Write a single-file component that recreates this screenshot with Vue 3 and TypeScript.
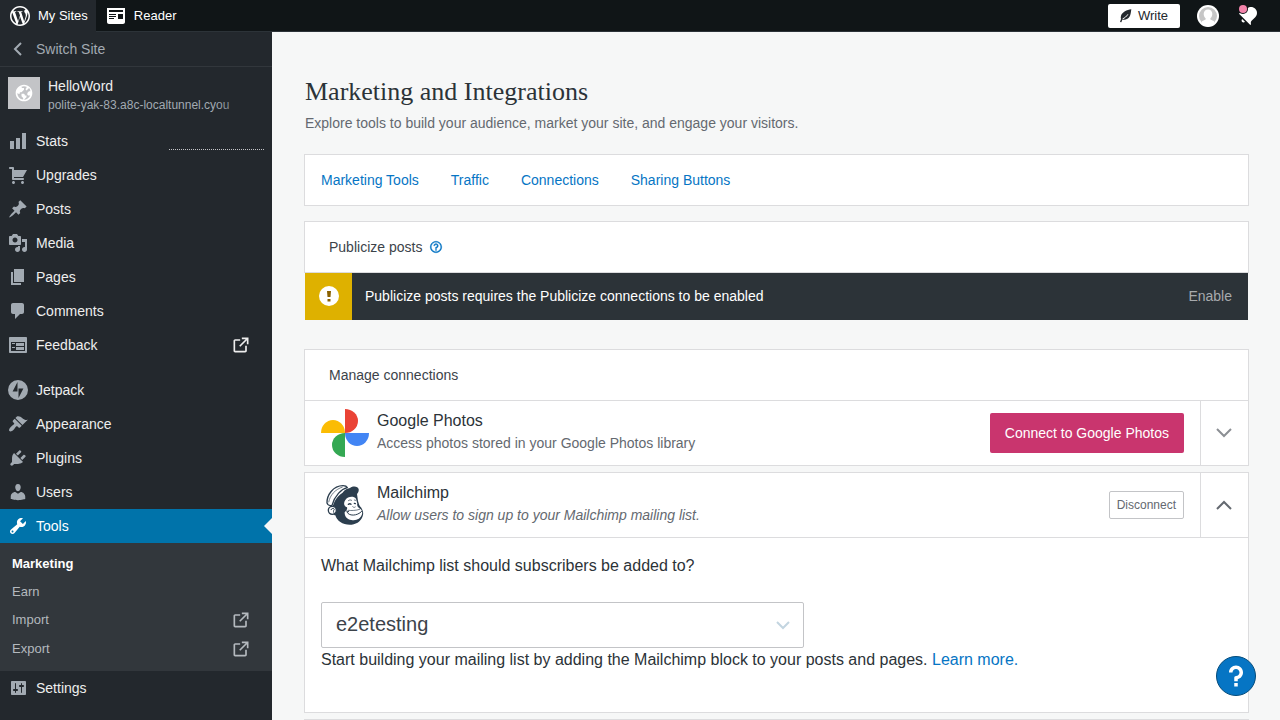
<script setup lang="ts">
import { ref } from 'vue'

interface MenuItem {
  label: string
  icon: string
  external?: boolean
  active?: boolean
  sparkline?: boolean
}

interface SubItem {
  label: string
  external?: boolean
  current?: boolean
}

const icons: Record<string, string> = {
  stats: 'M18 18V2h-4v16h4zm-6 0V7H8v11h4zm-6 0v-8H2v8h4z',
  cart: 'M6 13h9c.55 0 1 .45 1 1s-.45 1-1 1H5c-.55 0-1-.45-1-1V4H2c-.55 0-1-.45-1-1s.45-1 1-1h3c.55 0 1 .45 1 1v2h13l-4 7H6v1zm-.5 3c.83 0 1.5.67 1.5 1.5S6.33 19 5.5 19 4 18.33 4 17.5 4.67 16 5.5 16zm9 0c.83 0 1.5.67 1.5 1.5s-.67 1.5-1.5 1.5-1.5-.67-1.5-1.5.67-1.5 1.5-1.5z',
  post: 'M10.44 3.02l1.82-1.82 6.36 6.35-1.83 1.82c-1.05-.68-2.48-.57-3.41.36l-.75.75c-.92.93-1.04 2.35-.35 3.41l-1.83 1.82-2.41-2.41-2.8 2.79c-.42.42-3.38 2.71-3.8 2.29s1.86-3.39 2.28-3.81l2.79-2.79L4.1 9.36l1.83-1.82c1.05.69 2.48.57 3.4-.36l.75-.75c.93-.92 1.05-2.35.36-3.41z',
  media: 'M13 11V4c0-.55-.45-1-1-1h-1.67L9 1H5L3.67 3H2c-.55 0-1 .45-1 1v7c0 .55.45 1 1 1h10c.55 0 1-.45 1-1zM7 4.5c1.38 0 2.5 1.12 2.5 2.5S8.38 9.5 7 9.5 4.5 8.38 4.5 7 5.62 4.5 7 4.5zM14 6h5v10.5c0 1.38-1.12 2.5-2.5 2.5S14 17.88 14 16.5s1.12-2.5 2.5-2.5c.17 0 .34.02.5.05V9h-3V6zm-4 8.05V13h2v3.5c0 1.38-1.12 2.5-2.5 2.5S7 17.88 7 16.5 8.12 14 9.5 14c.17 0 .34.02.5.05z',
  page: 'M6 15V2h10v13H6zm-1 1h8v2H3V5h2v11z',
  comment: 'M5 2h9c1.1 0 2 .9 2 2v7c0 1.1-.9 2-2 2h-2l-5 5v-5H5c-1.1 0-2-.9-2-2V4c0-1.1.9-2 2-2z',
  feedback: 'M2 2h16c.55 0 1 .45 1 1v14c0 .55-.45 1-1 1H2c-.55 0-1-.45-1-1V3c0-.55.45-1 1-1zm15 14V7H3v9h14zM4 8v1h3V8H4zm4 0v3h8V8H8zm-4 4v1h3v-1H4zm4 0v3h8v-3H8z',
  jetpack: 'M10 0a10 10 0 1 0 0 20 10 10 0 0 0 0-20zM9.5 11.6H4.6L9.5 2zM10.5 18V8.4h4.9z',
  appearance: 'M14.48 11.06L7.41 3.99l1.5-1.5c.5-.56 2.3-.47 3.51.32 1.21.8 1.43 1.28 2.91 2.1 1.18.64 2.45 1.26 4.45.85zm-.71.71L6.7 4.7 4.93 6.47c-.39.39-.39 1.02 0 1.41l1.06 1.06c.39.39.39 1.03 0 1.42-.6.6-1.43 1.11-2.21 1.69-.35.26-.7.53-1.01.84C1.43 14.23.4 16.08 1.4 17.07c.99 1 2.84-.03 4.18-1.36.31-.31.58-.66.85-1.02.57-.78 1.08-1.61 1.69-2.21.39-.39 1.02-.39 1.41 0l1.06 1.06c.39.39 1.02.39 1.41 0z',
  plugins: 'M13.11 4.36L9.87 7.6 8 5.73l3.24-3.24c.35-.34 1.05-.2 1.56.32.52.51.66 1.21.31 1.55zm-8 1.77l.91-1.12 9.01 9.01-1.19.84c-.71.71-2.63 1.16-3.82 1.16H6.14L4.9 17.26c-.59.59-1.54.59-2.12 0-.59-.58-.59-1.53 0-2.12l1.24-1.24v-3.88c0-1.13.4-3.19 1.09-3.89zm7.26 3.97l3.24-3.24c.34-.35 1.04-.21 1.55.31.52.51.66 1.21.31 1.55l-3.24 3.25z',
  users: 'M10 9.25c-2.27 0-2.73-3.44-2.73-3.44C7 4.02 7.82 2 9.97 2c2.16 0 2.98 2.02 2.71 3.81 0 0-.41 3.44-2.68 3.44zm0 2.57L12.72 10c2.39 0 4.52 2.33 4.52 4.53v2.49s-3.65 1.13-7.24 1.13c-3.65 0-7.24-1.13-7.24-1.13v-2.49c0-2.25 1.94-4.48 4.47-4.48z',
  tools: 'M16.68 9.77c-1.34 1.34-3.3 1.67-4.95.99l-5.41 6.52c-.99.99-2.59.99-3.58 0s-.99-2.59 0-3.57l6.52-5.42c-.68-1.65-.35-3.61.99-4.95 1.28-1.28 3.12-1.62 4.72-1.06l-2.89 2.89 2.82 2.82 2.86-2.87c.53 1.58.18 3.39-1.08 4.65zM3.81 16.21c.4.39 1.04.39 1.43 0 .4-.4.4-1.04 0-1.43-.39-.4-1.03-.4-1.43 0-.39.39-.39 1.03 0 1.43z',
  settings: 'M18 16V4c0-.55-.45-1-1-1H4c-.55 0-1 .45-1 1v12c0 .55.45 1 1 1h13c.55 0 1-.45 1-1zM8 11h1c.55 0 1 .45 1 1s-.45 1-1 1H8v1.5c0 .28-.22.5-.5.5s-.5-.22-.5-.5V13H6c-.55 0-1-.45-1-1s.45-1 1-1h1V5.5c0-.28.22-.5.5-.5s.5.22.5.5V11zm5-2h-1c-.55 0-1-.45-1-1s.45-1 1-1h1V5.5c0-.28.22-.5.5-.5s.5.22.5.5V7h1c.55 0 1 .45 1 1s-.45 1-1 1h-1v5.5c0 .28-.22.5-.5.5s-.5-.22-.5-.5V9z',
}

const externalPath =
  'M19 13v6c0 1.105-.895 2-2 2H5c-1.105 0-2-.895-2-2V7c0-1.105.895-2 2-2h6v2H5v12h12v-6h2zM13 3v2h4.586l-7.793 7.793 1.414 1.414L19 6.414V11h2V3h-8z'

const menuGroups: MenuItem[][] = [
  [
    { label: 'Stats', icon: 'stats', sparkline: true },
    { label: 'Upgrades', icon: 'cart' },
    { label: 'Posts', icon: 'post' },
    { label: 'Media', icon: 'media' },
    { label: 'Pages', icon: 'page' },
    { label: 'Comments', icon: 'comment' },
    { label: 'Feedback', icon: 'feedback', external: true },
  ],
  [
    { label: 'Jetpack', icon: 'jetpack' },
    { label: 'Appearance', icon: 'appearance' },
    { label: 'Plugins', icon: 'plugins' },
    { label: 'Users', icon: 'users' },
    { label: 'Tools', icon: 'tools', active: true },
    { label: 'Settings', icon: 'settings' },
  ],
]

const toolsMenu: SubItem[] = [
  { label: 'Marketing', current: true },
  { label: 'Earn' },
  { label: 'Import', external: true },
  { label: 'Export', external: true },
]

const tabs: string[] = ['Marketing Tools', 'Traffic', 'Connections', 'Sharing Buttons']
const selectedList = ref<string>('e2etesting')
const googleOpen = ref<boolean>(false)
const mailchimpOpen = ref<boolean>(true)
</script>

<template>
  <div class="shell">
    <header class="masthead">
      <a href="#" class="mast-item current">
        <svg width="24" height="24" viewBox="0 0 24 24" aria-hidden="true">
          <path fill="currentColor" d="M12 2C6.5 2 2 6.5 2 12s4.5 10 10 10 10-4.5 10-10S17.5 2 12 2zM3.5 12c0-1.2.3-2.4.7-3.5L8.3 19.6C5.4 18.3 3.5 15.4 3.5 12zM12 20.5c-.8 0-1.6-.1-2.4-.3l2.5-7.4 2.6 7.1c0 0 0 .1.1.1C13.9 20.3 13 20.5 12 20.5zM13.2 8c.5 0 1-.1 1-.1.5-.1.4-.7 0-.7 0 0-1.4.1-2.2.1-.8 0-2.2-.1-2.2-.1-.5 0-.5.7 0 .7 0 0 .4.1.9.1l1.3 3.6-1.9 5.6L7 8c.5 0 1-.1 1-.1.5-.1.4-.7-.1-.7 0 0-1.4.1-2.2.1-.2 0-.3 0-.5 0C6.4 5.1 9 3.5 12 3.5c2.2 0 4.2.8 5.7 2.2 0 0-.1 0-.1 0-.8 0-1.4.7-1.4 1.5 0 .7.4 1.3.9 1.9.4.6.7 1.4.7 2.5 0 .7-.2 1.7-.7 2.9l-.9 2.9L13.2 8zM16.3 19.4l2.6-7.5c.5-1.2.6-2.2.6-3 0-.3 0-.6-.1-.8.7 1.2 1.1 2.6 1.1 4C20.5 15.2 18.8 17.9 16.3 19.4z" />
        </svg>
        <span>My Sites</span>
      </a>
      <a href="#" class="mast-item">
        <svg width="24" height="24" viewBox="0 0 24 24" aria-hidden="true">
          <path fill="currentColor" d="M3 4v14c0 1.1.9 2 2 2h14c1.1 0 2-.9 2-2V4H3zm7 11H5v-1h5v1zm2-2H5v-1h7v1zm0-2H5v-1h7v1zm7 4h-5v-5h5v5zm0-7H5V6h14v2z" />
        </svg>
        <span>Reader</span>
      </a>
      <div class="mast-right">
        <button type="button" class="write">
          <svg width="12" height="14" viewBox="0 0 36 42" aria-hidden="true">
            <path fill="#23282d" d="M34 1C20 3 7 9 3 20c-1 4-1 7 0 10L0 39l4 1 3-8c12 1 22-5 24-15 2-6 2-11 3-16z" />
            <path fill="none" stroke="#fff" stroke-width="3" stroke-linecap="round" d="M9 29c5-2 10-6 14-12" />
          </svg>
          <span>Write</span>
        </button>
        <a href="#" class="mast-avatar" aria-label="My profile">
          <svg width="22" height="22" viewBox="0 0 22 22" aria-hidden="true">
            <circle cx="11" cy="11" r="11" fill="#fff" />
            <circle cx="11" cy="11" r="9" fill="#c6c6c6" />
            <path fill="#fff" d="M11 4.500c2.700 0 4.300 1.900 4.300 4.500 0 1.800-.8 3.300-1.900 4.200v1.300l3.600 1.700v3A10 10 0 0 1 5 19.200v-3l3.600-1.700v-1.300C7.500 12.300 6.700 10.800 6.700 9c0-2.600 1.600-4.500 4.300-4.500z" />
          </svg>
        </a>
        <a href="#" class="mast-bell" aria-label="Notifications">
          <svg width="24" height="24" viewBox="0 0 24 24" aria-hidden="true">
            <path fill="#fff" d="M6.140 14.970l2.828 2.827c-.362.362-.862.586-1.414.586-1.105 0-2-.895-2-2 0-.552.224-1.052.586-1.414zm8.867 5.324L14.300 21 3 9.700l.706-.707 1.102.157c.754.108 1.690-.122 2.077-.510l3.885-3.884c2.340-2.340 6.135-2.340 8.475 0s2.340 6.135 0 8.475l-3.885 3.886c-.388.388-.618 1.323-.510 2.077l.157 1.100z" />
            <circle cx="7" cy="5" r="5" fill="#101517" />
            <circle cx="7" cy="5" r="4" fill="#f283aa" />
          </svg>
        </a>
      </div>
    </header>

    <div class="layout">
      <aside class="sidebar">
        <button type="button" class="switch">
          <svg width="20" height="20" viewBox="0 0 20 20" aria-hidden="true">
            <path fill="none" stroke="currentColor" stroke-width="2" d="M13 4l-6 6 6 6" />
          </svg>
          <span>Switch Site</span>
        </button>

        <a href="#" class="site">
          <span class="site-icon">
            <svg width="20" height="20" viewBox="0 0 24 24" aria-hidden="true">
              <path fill="#fff" d="M12 2C6.477 2 2 6.477 2 12s4.477 10 10 10 10-4.477 10-10S17.523 2 12 2zm0 18l2-2 1-1v-2h-2v-1l-1-1H9v3l2 2v1.931C7.060 19.436 4 16.072 4 12l1 1h2v-2h2l3-3V6h-2L9 5v-.411a7.945 7.945 0 016 0V6l-1 1v1l1 1 3.130-3.130A7.983 7.983 0 0119.736 10H18l-2 2v2l1 1h2l.286.286C18.029 18.061 15.239 20 12 20z" />
            </svg>
          </span>
          <span class="site-text">
            <span class="site-name">HelloWord</span>
            <span class="site-domain">polite-yak-83.a8c-localtunnel.cyou</span>
          </span>
        </a>

        <nav class="menu" aria-label="Site">
          <ul v-for="(group, g) in menuGroups" :key="g">
            <li v-for="item in group" :key="item.label">
              <a href="#" class="menu-link" :class="{ active: item.active }">
                <svg class="menu-icon" width="20" height="20" viewBox="0 0 20 20" aria-hidden="true">
                  <path fill="currentColor" fill-rule="evenodd" :d="icons[item.icon]" />
                </svg>
                <span class="menu-label">{{ item.label }}</span>
                <span v-if="item.sparkline" class="sparkline"></span>
                <svg v-if="item.external" class="external" width="20" height="20" viewBox="0 0 24 24" aria-hidden="true">
                  <path fill="currentColor" :d="externalPath" />
                </svg>
              </a>
              <ul v-if="item.active" class="submenu">
                <li v-for="sub in toolsMenu" :key="sub.label">
                  <a href="#" class="sub-link" :class="{ current: sub.current, outside: sub.external }">
                    <span>{{ sub.label }}</span>
                    <svg v-if="sub.external" class="external" width="20" height="20" viewBox="0 0 24 24" aria-hidden="true">
                      <path fill="currentColor" :d="externalPath" />
                    </svg>
                  </a>
                </li>
              </ul>
            </li>
          </ul>
        </nav>
      </aside>

      <main class="content">
        <h1>Marketing and Integrations</h1>
        <p class="lead">Explore tools to build your audience, market your site, and engage your visitors.</p>

        <nav class="tabs card" aria-label="Marketing">
          <a v-for="tab in tabs" :key="tab" href="#">{{ tab }}</a>
        </nav>

        <div class="section-header card">
          <h2>Publicize posts</h2>
          <button type="button" class="info" aria-label="More information">
            <svg width="14" height="14" viewBox="0 0 24 24" aria-hidden="true">
              <path fill="currentColor" stroke="currentColor" stroke-width="0.5" d="M12 4c4.411 0 8 3.589 8 8s-3.589 8-8 8-8-3.589-8-8 3.589-8 8-8m0-2C6.477 2 2 6.477 2 12s4.477 10 10 10 10-4.477 10-10S17.523 2 12 2zm4 8c0-2.210-1.790-4-4-4s-4 1.790-4 4h2c0-1.103.897-2 2-2s2 .897 2 2-.897 2-2 2c-.552 0-1 .448-1 1v2h2v-1.141c1.722-.447 3-1.998 3-3.859zm-3 6h-2v2h2v-2z" />
            </svg>
          </button>
        </div>
        <div class="notice">
          <span class="notice-icon">
            <svg width="20" height="20" viewBox="0 0 20 20" aria-hidden="true">
              <circle cx="10" cy="10" r="10" fill="#fff" />
              <path fill="#8a6100" d="M8 5h4l-.500 6h-3zM8.500 13h3v2.500h-3z" />
            </svg>
          </span>
          <span class="notice-text">Publicize posts requires the Publicize connections to be enabled</span>
          <button type="button" class="notice-action">Enable</button>
        </div>

        <div class="section-header card manage">
          <h2>Manage connections</h2>
        </div>

        <section class="card service attached">
          <div class="service-head">
            <svg class="logo" width="48" height="48" viewBox="0 0 48 48" aria-hidden="true">
              <path fill="#ea4335" d="M24 0a13 12 0 0 1 0 24z" />
              <path fill="#fbbc04" d="M0 24a12 13 0 0 1 24 0z" />
              <path fill="#4285f4" d="M24 24h24a12 13 0 0 1-24 0z" />
              <path fill="#34a853" d="M24 24v24a13 12 0 0 1 0-24z" />
            </svg>
            <div class="service-text">
              <h3>Google Photos</h3>
              <p>Access photos stored in your Google Photos library</p>
            </div>
            <button type="button" class="primary">Connect to Google Photos</button>
            <button type="button" class="toggle" :aria-expanded="googleOpen" aria-label="Toggle Google Photos" @click="googleOpen = !googleOpen">
              <svg width="24" height="24" viewBox="0 0 24 24" aria-hidden="true">
                <path fill="none" stroke="#8c8f94" stroke-width="2" d="M5 8l7 7 7-7" />
              </svg>
            </button>
          </div>
        </section>

        <section class="card service">
          <div class="service-head ruled">
            <svg class="logo" width="48" height="48" viewBox="63 258 144 144" aria-hidden="true">
              <path fill="#2c3e4e" d="M98 334C106 312 114 302 127 294C134 284 143 280 150 279C160 272 174 274 176 283C177 289 174 294 171 297L174 318C177 327 177 333 184 338C187 344 191 350 189 360C186 375 173 387 155 389C130 391 111 379 106 361C99 362 101 343 98 334z" />
              <path fill="#fff" stroke="#2c3e4e" stroke-width="4" stroke-linejoin="round" d="M81 324C80 301 99 272 129 272C135 272 140 274 142 278C124 282 104 302 96 331C90 333 83 330 81 324z" />
              <path fill="none" stroke="#2c3e4e" stroke-width="2" d="M86 322C90 300 106 283 128 276" />
              <circle cx="97" cy="346" r="12" fill="#fff" stroke="#2c3e4e" stroke-width="4" />
              <path fill="none" stroke="#2c3e4e" stroke-width="3" stroke-linecap="round" d="M93 344c2-5 9-5 10-1-1 2-4 4-2 9" />
              <path fill="#fff" d="M136 315C143 304 161 302 168 311L172 326C170 332 174 337 180 341C187 344 187 353 186 358C182 372 168 378 154 375C142 373 133 364 134 352C139 347 143 343 141 337C131 333 130 323 136 315z" />
              <g fill="none" stroke="#2c3e4e" stroke-linecap="round">
                <path stroke-width="2" d="M145 317c3-3 7-3 10-1M163 315l4 1M158 335c2 3 6 3 8 1M145 346c9 1 23 1 34-3" />
                <path stroke-width="4" d="M145 328c3-2 6-2 8 0M163 325l3 1" />
                <path stroke-width="3" d="M141 351c4 13 31 13 44-2M140 348l6 2" />
              </g>
            </svg>
            <div class="service-text">
              <h3>Mailchimp</h3>
              <p><em>Allow users to sign up to your Mailchimp mailing list.</em></p>
            </div>
            <button type="button" class="compact">Disconnect</button>
            <button type="button" class="toggle" :aria-expanded="mailchimpOpen" aria-label="Toggle Mailchimp" @click="mailchimpOpen = !mailchimpOpen">
              <svg width="24" height="24" viewBox="0 0 24 24" aria-hidden="true">
                <path fill="none" stroke="#646970" stroke-width="2" d="M5 16l7-7 7 7" />
              </svg>
            </button>
          </div>
          <div v-if="mailchimpOpen" class="service-body">
            <label for="mailchimp-list">What Mailchimp list should subscribers be added to?</label>
            <div class="select-wrap">
              <select id="mailchimp-list" v-model="selectedList">
                <option value="e2etesting">e2etesting</option>
              </select>
              <svg class="select-arrow" width="14" height="9" viewBox="0 0 14 9" aria-hidden="true">
                <path fill="none" stroke="#c3d5e0" stroke-width="2" d="M1 1l6 6 6-6" />
              </svg>
            </div>
            <p>Start building your mailing list by adding the Mailchimp block to your posts and pages. <a href="#">Learn more.</a></p>
          </div>
        </section>

        <section class="card service next"></section>
      </main>
    </div>

    <button type="button" class="help" aria-label="Help">
      <svg width="42" height="42" viewBox="0 0 24 24" aria-hidden="true">
        <path fill="#fff" d="M16 10c0-2.210-1.790-4-4-4s-4 1.790-4 4h2c0-1.103.897-2 2-2s2 .897 2 2-.897 2-2 2c-.552 0-1 .448-1 1v2h2v-1.141c1.722-.447 3-1.998 3-3.859zm-3 6h-2v2h2v-2z" />
      </svg>
    </button>
  </div>
</template>

<style>
body {
  margin: 0;
  background: #f6f7f7;
}
</style>

<style scoped>
* {
  box-sizing: border-box;
}

.shell {
  display: flex;
  flex-direction: column;
  height: 100vh;
  overflow: hidden;
  font-family: "Liberation Sans", Arial, sans-serif;
  font-size: 14px;
  line-height: 20px;
  color: #2c3338;
}

a {
  color: #0675c4;
  text-decoration: none;
}

button {
  font: inherit;
  padding: 0;
  border: 0;
  background: none;
  cursor: pointer;
}

svg {
  display: block;
  flex: none;
}

h1,
h2,
h3,
p,
ul {
  margin: 0;
  padding: 0;
  font-weight: 400;
}

ul {
  list-style: none;
}

.masthead {
  display: flex;
  flex: none;
  height: 32px;
  background: #101517;
  border-bottom: 1px solid #2c3338;
  font-size: 13px;
}

.mast-item {
  display: flex;
  align-items: center;
  gap: 6px;
  height: 32px;
  padding: 0 8px;
  color: #fff;
}

.mast-item.current {
  background: #23282d;
}

.mast-right {
  display: flex;
  align-items: center;
  margin-left: auto;
  padding-right: 20px;
  height: 32px;
}

.write {
  display: flex;
  align-items: center;
  gap: 6px;
  height: 24px;
  padding: 0 12px;
  border-radius: 2px;
  background: #fff;
  color: #23282d;
}

.mast-avatar {
  margin-left: 17px;
}

.mast-bell {
  margin-left: 17px;
}

.layout {
  display: flex;
  flex: 1;
  min-height: 0;
}

.sidebar {
  flex: none;
  width: 272px;
  background: #23282d;
  color: #eee;
}

.switch {
  display: flex;
  align-items: center;
  gap: 8px;
  width: 100%;
  height: 35px;
  padding: 0 8px;
  border-bottom: 1px solid #32373c;
  color: #a2aab2;
}

.site {
  position: relative;
  display: flex;
  gap: 8px;
  padding: 9px 8px;
  color: #eee;
}

.site::after {
  content: "";
  position: absolute;
  top: 0;
  right: 8px;
  bottom: 0;
  width: 48px;
  background: linear-gradient(to right, rgba(35, 40, 45, 0), #23282d);
}

.site-icon {
  display: flex;
  align-items: center;
  justify-content: center;
  width: 32px;
  height: 32px;
  margin-top: 1px;
  background: #c3c4c7;
}

.site-text {
  display: flex;
  flex-direction: column;
}

.site-name {
  line-height: 20px;
}

.site-domain {
  font-size: 12px;
  line-height: 18px;
  color: #a2aab2;
}

.menu ul + ul {
  margin-top: 11px;
}

.menu {
  padding-top: 1px;
}

.menu-link {
  display: flex;
  align-items: center;
  gap: 8px;
  height: 34px;
  padding: 0 8px;
  color: #eee;
}

.menu-icon {
  color: #a2aab2;
}

.menu-link.active {
  position: relative;
  background: #0073aa;
  color: #fff;
}

.menu-link.active .menu-icon {
  color: #fff;
}

.menu-link.active::after {
  content: "";
  position: absolute;
  top: 9px;
  right: 0;
  border: 8px solid transparent;
  border-left: 0;
  border-right-color: #f6f7f7;
}

.sparkline {
  align-self: flex-end;
  width: 95px;
  margin: 0 0 8px auto;
  border-bottom: 1px dotted #c3c4c7;
}

.external {
  margin: 0 13px 0 auto;
}

.submenu {
  padding: 7px 0;
  background: #32373c;
  font-size: 13px;
}

.sub-link {
  display: flex;
  align-items: center;
  height: 28px;
  padding: 0 8px 0 12px;
  color: #b4b9be;
}

.sub-link.outside {
  height: 29px;
  padding-bottom: 1px;
}

.sub-link.current {
  color: #fff;
  font-weight: 700;
}

.content {
  flex: 1;
  min-width: 0;
  padding: 44px 31px 0 32px;
}

h1 {
  padding-left: 1px;
  font-family: "Liberation Serif", serif;
  font-size: 26px;
  line-height: 32px;
}

.lead {
  margin: 5px 0 21px 1px;
  color: #646970;
}

.card {
  background: #fff;
  border: 1px solid #dcdcde;
}

.tabs {
  display: flex;
  align-items: center;
  gap: 32px;
  height: 52px;
  padding: 0 16px;
}

.section-header {
  display: flex;
  align-items: center;
  gap: 7px;
  height: 52px;
  margin-top: 15px;
  padding: 0 24px;
}

.section-header h2 {
  font-size: 14px;
  color: #3c434a;
}

.info {
  color: #0675c4;
}

.notice {
  display: flex;
  align-items: center;
  height: 47px;
  margin: 0 1px;
  padding-bottom: 1px;
  background: linear-gradient(to right, #deb100 47px, #2c3338 47px);
  color: #fff;
}

.notice-icon {
  display: flex;
  align-items: center;
  justify-content: center;
  width: 47px;
}

.notice-text {
  flex: 1;
  padding-left: 13px;
}

.notice-action {
  padding: 0 16px;
  color: #a7aaad;
}

.manage {
  margin-top: 29px;
}

.service {
  margin-top: 6px;
}

.service.attached {
  margin-top: 0;
  border-top: 0;
}

.service-head {
  display: flex;
  align-items: center;
  height: 64px;
  padding-left: 16px;
}

.service-head.ruled {
  height: 65px;
  border-bottom: 1px solid #dcdcde;
}

.service-text {
  flex: 1;
  min-width: 0;
  padding: 0 0 4px 8px;
}

h3 {
  font-size: 16px;
  line-height: 24px;
}

.service-text p {
  color: #646970;
}

.primary {
  height: 40px;
  padding: 0 15px;
  border-radius: 2px;
  background: #c9356e;
  color: #fff;
}

.compact {
  height: 28px;
  padding: 0 7px;
  border: 1px solid #c3c4c7;
  border-radius: 2px;
  background: #fff;
  font-size: 12px;
  color: #646970;
}

.toggle {
  display: flex;
  align-items: center;
  justify-content: center;
  align-self: stretch;
  width: 48px;
  margin-left: 16px;
  padding-right: 1px;
  border-left: 1px solid #dcdcde;
}

.service-body {
  padding: 16px 16px 40px;
  font-size: 16px;
  line-height: 24px;
}

.service-body label {
  display: block;
  margin-bottom: 24px;
}

.select-wrap {
  position: relative;
  width: 483px;
  max-width: 100%;
}

select {
  display: block;
  width: 100%;
  height: 46px;
  padding: 0 40px 2px 14px;
  appearance: none;
  border: 1px solid #c3c4c7;
  border-radius: 2px;
  background: #fff;
  font: inherit;
  font-size: 20px;
  color: #3c434a;
}

.select-arrow {
  position: absolute;
  top: 19px;
  right: 14px;
  pointer-events: none;
}

.next {
  height: 66px;
}

.help {
  position: fixed;
  right: 24px;
  bottom: 24px;
  display: flex;
  align-items: center;
  justify-content: center;
  width: 40px;
  height: 40px;
  border: 1px solid #044b7a;
  border-radius: 50%;
  background: #0675c4;
}
</style>
